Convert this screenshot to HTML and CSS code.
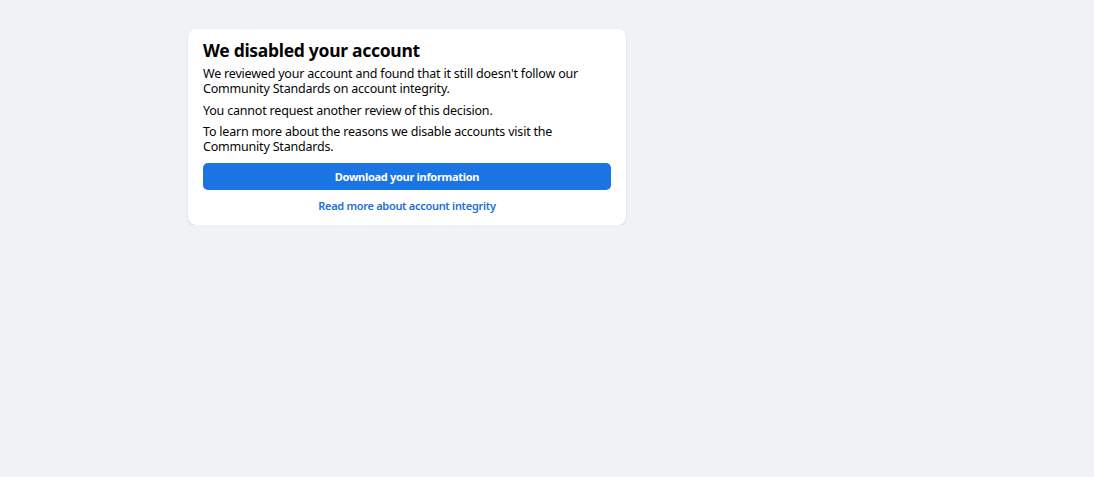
FILE: index.html
```html
<!DOCTYPE html>
<html lang="en">
<head>
    <meta charset="UTF-8">
    <title>We disabled your account</title>
    <link rel="stylesheet" href="styles.css">
</head>
<body>
    <div class="page">
        <div class="card">
            <h1 class="title">We disabled your account</h1>
            <p>We reviewed your account and found that it still doesn't follow our Community Standards on account integrity.</p>
            <p>You cannot request another review of this decision.</p>
            <p>To learn more about the reasons we disable accounts visit the Community Standards.</p>
            <button class="primary-button">Download your information</button>
            <a class="more-link" href="#">Read more about account integrity</a>
        </div>
    </div>
</body>
</html>
```

FILE: styles.css
```css
body {
    margin: 0;
    background: #f0f2f5;
    font-family: "Noto Sans", "Open Sans", Arial, sans-serif;
    color: #050505;
}
.page {
    padding: 29px 0 0 188px;
}
.card {
    width: 438px;
    box-sizing: border-box;
    background: #fff;
    border-radius: 8px;
    box-shadow: 0 1px 2px rgba(0, 0, 0, 0.15);
    padding: 9px 15px 12px;
    display: flex;
    flex-direction: column;
}
.title {
    margin: 0 0 4px;
    font-size: 17.5px;
    font-weight: 700;
    letter-spacing: -0.3px;
    line-height: 24px;
}
.card p {
    margin: 0 0 6.5px;
    font-size: 12.5px;
    letter-spacing: -0.2px;
    line-height: 15px;
}
.primary-button {
    margin-top: 2px;
    height: 27px;
    border: none;
    border-radius: 5px;
    background: #1b74e4;
    color: #fff;
    font-family: inherit;
    font-size: 11px;
    font-weight: 700;
    letter-spacing: -0.3px;
    cursor: pointer;
}
.more-link {
    margin-top: 9px;
    align-self: center;
    color: #216fdb;
    font-size: 11px;
    font-weight: 600;
    letter-spacing: -0.3px;
    line-height: 14px;
    text-decoration: none;
}
```
